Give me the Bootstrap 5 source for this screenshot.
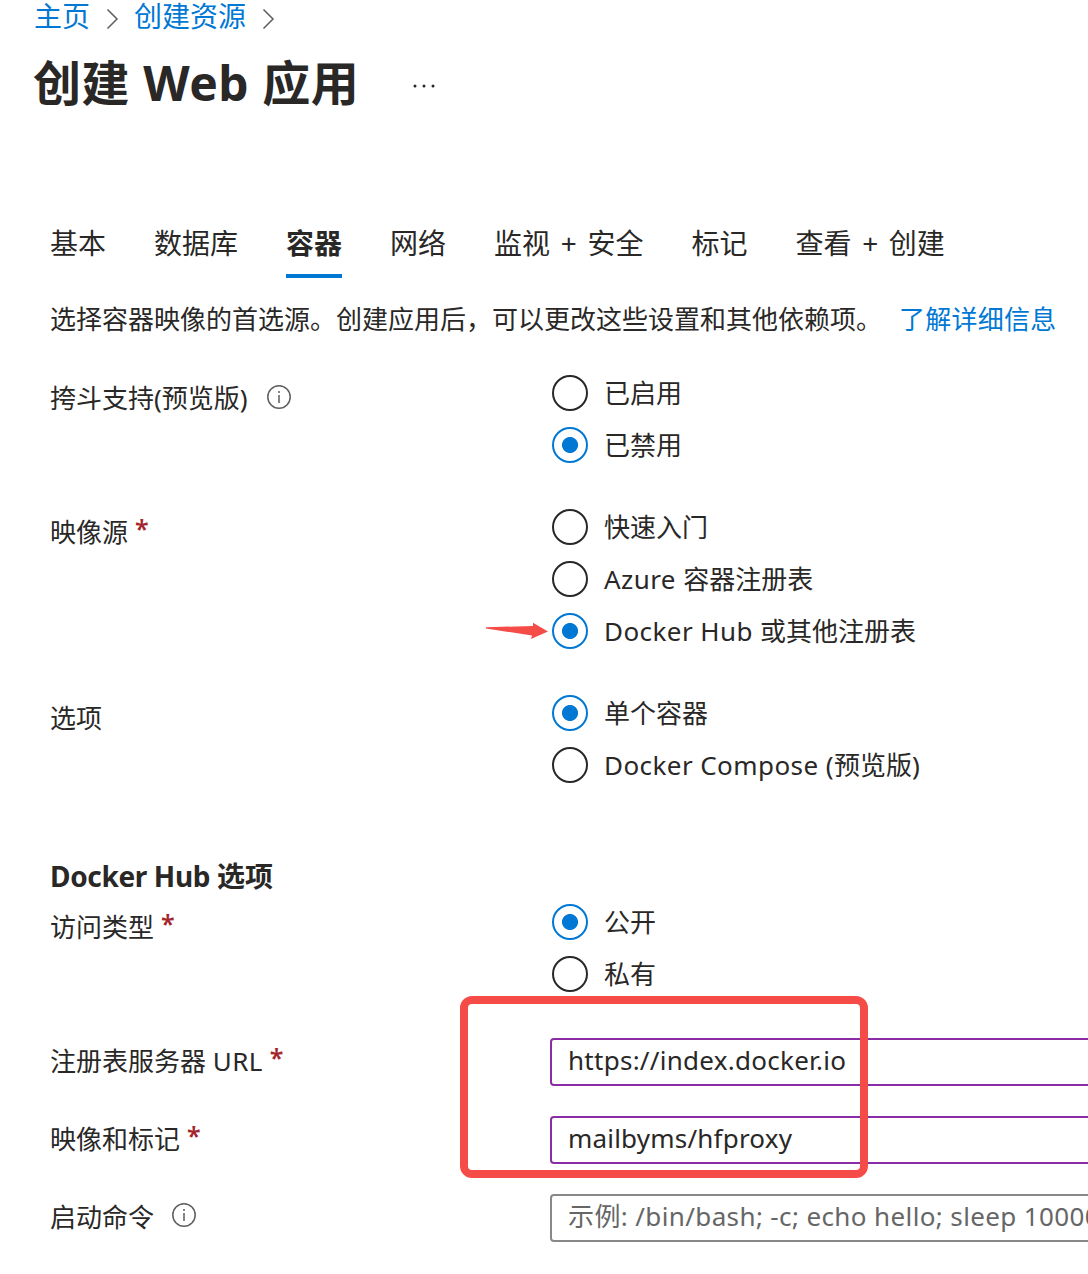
<!DOCTYPE html>
<html lang="zh-CN">
<head>
<meta charset="utf-8">
<meta name="viewport" content="width=device-width, initial-scale=1">
<title>创建 Web 应用</title>
<link rel="stylesheet" href="https://cdn.jsdelivr.net/npm/bootstrap@5.3.0/dist/css/bootstrap.min.css">
<style>
:root{--ink:#292827;--azure:#0078d4;--mark-red:#f64c48}
body{font-family:"Noto Sans","Noto Sans CJK SC",sans-serif;font-size:26px;line-height:40px;color:var(--ink);background:#fff;overflow:hidden;white-space:nowrap}
.page{width:1120px;height:1274px;overflow:hidden}
a{color:var(--azure);text-decoration:none}
.crumbs{height:34px;padding-left:34px;font-size:28px;line-height:34px}
.crumbs a{padding-bottom:2px}
.crumbs svg{margin:3px 15px 0 16px}
.page-title{height:98px;padding-left:33px;font-size:48px;line-height:98px;font-weight:700}
.page-title h1{font:inherit;margin:0;letter-spacing:.55px}
.more-dots{margin-left:54px;margin-top:5px}
.blade{padding-left:50px}
.tabs{gap:48px;margin-top:78px;height:68px}
.tabs .nav-link{padding:0;color:var(--ink);font-size:28px;line-height:66px;height:68px;border-radius:0}
.tabs .nav-link.active{font-weight:700;border-bottom:4px solid var(--azure);}
.plus{word-spacing:3.4px}
.intro{margin-top:21px;height:40px;gap:17px}
.intro a{letter-spacing:.25px}
.field-group{margin-bottom:30px}
.field-label{width:502px;padding-top:11px}
.req{position:relative;top:-4px;color:#a4262c;margin-left:7px;font-weight:600;font-size:25px}
.info{position:relative;top:-3px;margin-left:18px;margin-bottom:3px}
.first-group .info{margin-left:19px}
.opt{height:52px;gap:16px}
.opt .form-check-input{flex:none;width:36px;height:36px;margin:0;border:2px solid var(--ink);background:#fff;box-shadow:none}
.opt .form-check-input:checked{border-color:var(--azure);background:#fff radial-gradient(circle,var(--azure) 7.6px,#fff 8.4px) center/100% 100% no-repeat}
.opt span{padding-bottom:1px}
.latin,.opt span.latin{letter-spacing:.43px;padding:0}
.section-title{font-size:28px;font-weight:700;line-height:40px;margin:65px 0 0}
.section-title .latin{letter-spacing:-.35px}
.access{margin-bottom:38px}
.text-row{height:48px;margin-bottom:30px}
.text-row .field-label{width:500px;padding:0 0 3px}
.box{width:570px;height:48px;border:2px solid #8a8886;border-radius:4px;padding:0 16px 5px;font-size:26px;line-height:39px;color:var(--ink)}
.box:focus{box-shadow:none}
.box::placeholder{color:#666;opacity:1}
#url{letter-spacing:.27px}
#image{letter-spacing:.2px}
#cmd{letter-spacing:.38px}
.box.edited{border-color:#8a2da5}
.note-frame{position:absolute;left:460px;top:996px;width:408px;height:182px;border:8px solid var(--mark-red);border-radius:12px;pointer-events:none}
.note-arrow{position:absolute;left:486px;top:622px}
</style>
<script src="https://cdn.jsdelivr.net/npm/bootstrap@5.3.0/dist/js/bootstrap.bundle.min.js"></script>
</head>
<body>
<div class="page position-relative">
  <nav class="crumbs d-flex align-items-center">
    <a href="#">主页</a>
    <svg width="13" height="22" viewBox="0 0 13 22" fill="none" stroke="#605e5c" stroke-width="1.5"><path d="M1.5 1.5 11 11l-9.5 9.5"/></svg>
    <a href="#">创建资源</a>
    <svg width="13" height="22" viewBox="0 0 13 22" fill="none" stroke="#605e5c" stroke-width="1.5"><path d="M1.5 1.5 11 11l-9.5 9.5"/></svg>
  </nav>
  <header class="page-title d-flex align-items-center">
    <h1>创建 Web 应用</h1>
    <svg class="more-dots" width="24" height="4" viewBox="0 0 24 4" fill="#292827"><circle cx="2" cy="2" r="1.5"/><circle cx="11" cy="2" r="1.5"/><circle cx="20" cy="2" r="1.5"/></svg>
  </header>
  <main class="blade">
    <nav class="nav tabs flex-nowrap">
      <a class="nav-link" href="#">基本</a>
      <a class="nav-link" href="#">数据库</a>
      <a class="nav-link active" href="#">容器</a>
      <a class="nav-link" href="#">网络</a>
      <a class="nav-link plus" href="#">监视 + 安全</a>
      <a class="nav-link" href="#">标记</a>
      <a class="nav-link plus" href="#">查看 + 创建</a>
    </nav>
    <div class="intro d-flex"><span>选择容器映像的首选源。创建应用后，可以更改这些设置和其他依赖项。</span><a href="#">了解详细信息</a></div>

    <form class="mt-4 pt-1">
      <div class="field-group first-group d-flex">
        <div class="field-label">挎斗支持(预览版)<svg class="info" width="24" height="24" viewBox="0 0 24 24" fill="none" stroke="#605e5c" stroke-width="1.5"><circle cx="12" cy="12" r="11.2"/><path d="M12 10v8M12 6v2"/></svg></div>
        <div>
          <label class="opt d-flex align-items-center"><input class="form-check-input" type="radio" name="sidecar"><span>已启用</span></label>
          <label class="opt d-flex align-items-center"><input class="form-check-input" type="radio" name="sidecar" checked><span>已禁用</span></label>
        </div>
      </div>
      <div class="field-group d-flex">
        <div class="field-label">映像源<span class="req">*</span></div>
        <div>
          <label class="opt d-flex align-items-center"><input class="form-check-input" type="radio" name="source"><span>快速入门</span></label>
          <label class="opt d-flex align-items-center"><input class="form-check-input" type="radio" name="source"><span><span class="latin">Azure </span>容器注册表</span></label>
          <label class="opt d-flex align-items-center"><input class="form-check-input" type="radio" name="source" checked><span><span class="latin">Docker Hub </span>或其他注册表</span></label>
        </div>
      </div>
      <div class="field-group d-flex mb-0">
        <div class="field-label">选项</div>
        <div>
          <label class="opt d-flex align-items-center"><input class="form-check-input" type="radio" name="mode" checked><span>单个容器</span></label>
          <label class="opt d-flex align-items-center"><input class="form-check-input" type="radio" name="mode"><span><span class="latin">Docker Compose (</span>预览版)</span></label>
        </div>
      </div>
      <h2 class="section-title"><span class="latin">Docker Hub </span>选项</h2>
      <div class="field-group access d-flex">
        <div class="field-label">访问类型<span class="req">*</span></div>
        <div>
          <label class="opt d-flex align-items-center"><input class="form-check-input" type="radio" name="access" checked><span>公开</span></label>
          <label class="opt d-flex align-items-center"><input class="form-check-input" type="radio" name="access"><span>私有</span></label>
        </div>
      </div>
      <div class="text-row d-flex align-items-center">
        <label class="field-label" for="url">注册表服务器 <span class="latin">URL</span><span class="req">*</span></label>
        <input id="url" class="form-control box edited" value="https://index.docker.io">
      </div>
      <div class="text-row d-flex align-items-center">
        <label class="field-label" for="image">映像和标记<span class="req">*</span></label>
        <input id="image" class="form-control box edited" value="mailbyms/hfproxy">
      </div>
      <div class="text-row d-flex align-items-center">
        <label class="field-label" for="cmd">启动命令<svg class="info" width="24" height="24" viewBox="0 0 24 24" fill="none" stroke="#605e5c" stroke-width="1.5"><circle cx="12" cy="12" r="11.2"/><path d="M12 10v8M12 6v2"/></svg></label>
        <input id="cmd" class="form-control box" placeholder="示例: /bin/bash; -c; echo hello; sleep 10000">
      </div>
    </form>
  </main>
  <svg class="note-arrow" width="63" height="18" viewBox="0 0 63 18" fill="#f64c48"><path d="M0 5.2 47 4V.8L62 9.5 45 17l1-3.5L0 6.5z"/></svg>
  <div class="note-frame"></div>
</div>
</body>
</html>
